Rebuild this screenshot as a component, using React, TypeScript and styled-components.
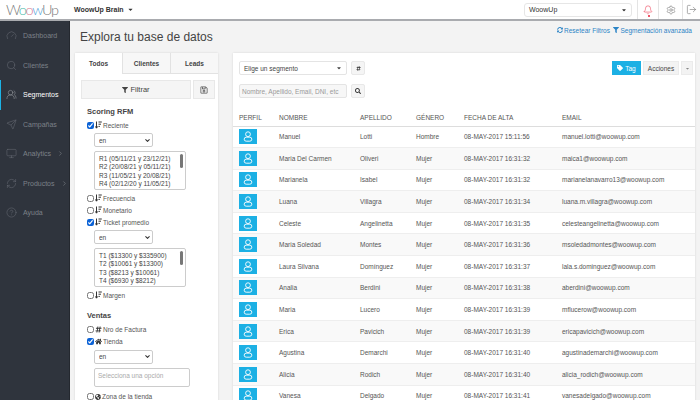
import React from 'react';
import styled, { createGlobalStyle } from 'styled-components';
import { FaFilter, FaRegSave, FaTag, FaSyncAlt, FaSearch, FaHome, FaGlobeAmericas, FaCaretDown, FaHashtag } from 'react-icons/fa';
import { Gauge, Search, UsersRound, Send, Monitor, RefreshCw, CircleHelp, Bell, Settings, LogOut, ChevronRight, ChevronDown } from 'lucide-react';

const GlobalStyle = createGlobalStyle`
  html, body { margin: 0; padding: 0; height: 400px; overflow: hidden; }
  body { font-family: "Liberation Sans", Arial, sans-serif; color: #444; background: #f3f3f3; }
  * { box-sizing: border-box; }
`;

const Page = styled.div`
  width: 700px;
  height: 400px;
  display: flex;
  flex-direction: column;
  overflow: hidden;
`;

const TopBar = styled.header`
  height: 21px;
  flex: none;
  display: flex;
  align-items: center;
  background: #fff;
  border-bottom: 2px solid #a9abaf;
  padding-left: 6px;
`;

const Logo = styled.div`
  width: 68px;
  font: 300 14.5px Lato, sans-serif;
  color: #777;
  letter-spacing: -1.3px;
`;

const LogoO = styled.span<{ $color: string }>`
  color: ${p => p.$color};
`;

const Brain = styled.div`
  font-size: 7px;
  font-weight: 700;
  color: #333;
  display: flex;
  align-items: center;
  gap: 3px;
  flex: 1;
`;

const TenantSelect = styled.div`
  width: 108px;
  height: 14px;
  margin-right: 5px;
  padding: 0 4px;
  display: flex;
  align-items: center;
  justify-content: space-between;
  font-size: 7px;
  color: #333;
  border: 1px solid #e6e6e6;
  border-radius: 3px;
`;

const TopIcon = styled.div<{ $w: number }>`
  width: ${p => p.$w}px;
  height: 19px;
  display: flex;
  align-items: center;
  justify-content: center;
  border-left: 1px solid #e4e4e4;
  position: relative;
`;

const RedDot = styled.span`
  position: absolute;
  left: 9.5px;
  bottom: 2px;
  width: 2px;
  height: 2px;
  background: #e8213a;
  border-radius: 50%;
`;

const Body = styled.div`
  flex: 1;
  display: flex;
  min-height: 0;
`;

const Sidebar = styled.nav`
  width: 70px;
  flex: none;
  background: #2f343d;
  border-right: 1px solid #24282f;
`;

const NavItem = styled.div<{ $active?: boolean }>`
  height: 29.5px;
  display: flex;
  align-items: center;
  gap: 6px;
  padding-left: ${p => (p.$active ? '5px' : '6px')};
  font-size: 7px;
  color: ${p => (p.$active ? '#fff' : '#7c8188')};
  border-left: ${p => (p.$active ? '1px solid #1cb3e6' : 'none')};

  svg:first-child {
    color: ${p => (p.$active ? '#9a9da3' : '#666b73')};
  }
`;

const Main = styled.main`
  flex: 1;
  min-width: 0;
  padding: 0 5px;
`;

const HeadRow = styled.div`
  height: 32px;
  display: flex;
  align-items: center;
  justify-content: space-between;
  padding: 0 3px 0 5px;
`;

const Title = styled.h1`
  margin: 0;
  font-size: 12px;
  font-weight: 400;
  color: #444;
`;

const Links = styled.div`
  display: flex;
  gap: 3px;
  font-size: 6.5px;
  color: #2b84c6;
  position: relative;
  top: -7px;
`;

const LinkItem = styled.span`
  display: flex;
  align-items: center;
  gap: 1.5px;
`;

const Columns = styled.div`
  display: flex;
  gap: 15px;
`;

const LeftPanel = styled.section`
  width: 143px;
  height: 350px;
  flex: none;
  background: #fff;
  box-shadow: 0 0 2px rgba(0, 0, 0, 0.12);
  overflow: hidden;
`;

const Tabs = styled.div`
  display: flex;
  height: 21px;
`;

const Tab = styled.div<{ $active?: boolean }>`
  flex: 1;
  display: flex;
  align-items: center;
  justify-content: center;
  font-size: 6.5px;
  font-weight: 700;
  color: #444;
  background: ${p => (p.$active ? '#fff' : '#f7f7f7')};
  border-left: ${p => (p.$active ? 'none' : '1px solid #e2e2e2')};
  border-bottom: ${p => (p.$active ? 'none' : '1px solid #e2e2e2')};
`;

const FilterBar = styled.div`
  display: flex;
  gap: 2px;
  padding: 6px 3px 0 6px;
`;

const FilterButton = styled.button`
  flex: 1;
  height: 19px;
  font: 7.5px "Liberation Sans", sans-serif;
  color: #444;
  background: #f5f5f5;
  border: 1px solid #e8e8e8;
  display: flex;
  align-items: center;
  justify-content: center;
  gap: 2px;
  padding: 0;
`;

const SaveButton = styled(FilterButton)`
  flex: none;
  width: 22px;
`;

const Filters = styled.div`
  padding: 8px 0 0 12px;
`;

const SectionTitle = styled.h3<{ $top?: number }>`
  margin: ${p => p.$top ?? 0}px 0 ${p => (p.$top ? 3.5 : 3)}px;
  font-size: 7.5px;
  line-height: 9px;
  font-weight: 700;
  color: #444;
`;

const CheckRow = styled.label`
  height: 12px;
  display: flex;
  align-items: center;
  gap: 1px;
  font-size: 6.5px;
  color: #555;
`;

const Check = styled.input.attrs({ type: 'checkbox' })`
  width: 7px;
  height: 7px;
  margin: 0;
  accent-color: #0b62d6;
`;

const SelectWrap = styled.div`
  position: relative;
  width: 59px;
  height: 14px;
  margin: 2px 0 4px 7px;

  svg {
    position: absolute;
    top: 3.5px;
    right: 2px;
    pointer-events: none;
    color: #333;
  }
`;

const SmallSelect = styled.select`
  display: block;
  width: 100%;
  height: 100%;
  padding: 0 0 0 4px;
  appearance: none;
  font: 6.5px "Liberation Sans", sans-serif;
  color: #444;
  background: #fff;
  border: 1px solid #ccc;
  border-radius: 2px;
`;

const ListBox = styled.div`
  position: relative;
  width: 92px;
  height: 39px;
  margin: 0 0 2px 7px;
  padding: 3px 4px;
  overflow: hidden;
  font-size: 6.5px;
  line-height: 8.4px;
  color: #444;
  border: 1px solid #ccc;
  border-radius: 2px;
  white-space: nowrap;
`;

const Thumb = styled.span`
  position: absolute;
  top: 2px;
  right: 2px;
  width: 3px;
  height: 14px;
  background: #777;
  border-radius: 2px;
`;

const TextArea = styled.div`
  width: 96px;
  height: 19px;
  margin: 1px 0 4px 7px;
  padding: 3px;
  font-size: 6.5px;
  color: #aaa;
  border: 1px solid #ccc;
  border-radius: 2px;
`;

const RightPanel = styled.section`
  width: 462px;
  height: 350px;
  flex: none;
  background: #fff;
  box-shadow: 0 0 2px rgba(0, 0, 0, 0.12);
  overflow: hidden;
`;

const Controls = styled.div`
  display: flex;
  justify-content: space-between;
  padding: 8px 2px 0 6px;
  height: 57px;
`;

const ControlStack = styled.div`
  display: flex;
  flex-direction: column;
  gap: 9px;
`;

const ControlRow = styled.div`
  display: flex;
  gap: 4px;
  align-items: center;
`;

const SegmentSelect = styled.div`
  width: 108px;
  height: 14px;
  padding: 0 4px;
  display: flex;
  align-items: center;
  justify-content: space-between;
  font-size: 6.5px;
  color: #444;
  border: 1px solid #e4e4e4;
  border-radius: 2px;
`;

const SearchInput = styled(SegmentSelect)`
  background: #f7f7f7;
  color: #999;
  padding: 0 2px;
`;

const SquareButton = styled.div`
  width: 14px;
  height: 14px;
  display: flex;
  align-items: center;
  justify-content: center;
  background: #f5f5f5;
  border: 1px solid #e8e8e8;
  border-radius: 2px;
  color: #333;
`;

const Actions = styled.div`
  display: flex;
  align-items: flex-start;
  gap: 2px;
`;

const TagButton = styled.div`
  height: 14px;
  width: 29px;
  display: flex;
  align-items: center;
  justify-content: center;
  gap: 2px;
  font-size: 6.5px;
  color: #fff;
  background: #1cb0e4;
`;

const ActionButton = styled.div<{ $w: number }>`
  height: 14px;
  width: ${p => p.$w}px;
  display: flex;
  align-items: center;
  justify-content: center;
  font-size: 6.5px;
  color: #444;
  background: #f3f3f3;
  border: 1px solid #ebebeb;
`;

const Table = styled.table`
  width: 100%;
  table-layout: fixed;
  border-collapse: collapse;
  font-size: 6.5px;
  color: #555;
`;

const Th = styled.th<{ $w?: number }>`
  width: ${p => (p.$w ? `${p.$w}px` : 'auto')};
  height: 16px;
  padding: 0 0 0 6px;
  text-align: left;
  font-weight: 400;
  color: #555;
  border-bottom: 1px solid #ddd;
`;

const Row = styled.tr<{ $alt: boolean }>`
  height: 21.6px;
  background: ${p => (p.$alt ? '#f9f9f9' : '#fff')};
  border-bottom: 1px solid #eee;
`;

const Td = styled.td`
  padding: 0 0 0 6px;
  white-space: nowrap;
  overflow: hidden;
`;

const Avatar = styled.div`
  width: 18px;
  height: 15px;
  display: flex;
  align-items: center;
  justify-content: center;
  background: #1cb0e4;
`;

// arrow with three shrinking bars, the sort mark next to the RFM filters
const SortIcon = () => (
  <svg width="7" height="8" viewBox="0 0 7 8" fill="none" stroke="#333" strokeWidth="1">
    <path d="M1.5 0.5v6.5M0.3 5.4l1.2 1.8 1.2-1.8" />
    <path d="M3.5 1h3.3M3.5 3.2h2.5M3.5 5.4h1.4" />
  </svg>
);

const ProfileIcon = () => (
  <svg width="10" height="11" viewBox="0 0 10 11" fill="none" stroke="#fff" strokeWidth="0.9">
    <circle cx="5" cy="3.2" r="2.4" />
    <rect x="1.2" y="6.2" width="7.6" height="4" rx="2" />
  </svg>
);

const EnSelect = () => (
  <SelectWrap>
    <SmallSelect defaultValue="en">
      <option value="en">en</option>
    </SmallSelect>
    <ChevronDown size={7} strokeWidth={3.5} />
  </SelectWrap>
);

const people = [
  ['Manuel', 'Lotti', 'Hombre', '08-MAY-2017 15:11:56', 'manuel.lotti@woowup.com'],
  ['Maria Del Carmen', 'Oliveri', 'Mujer', '08-MAY-2017 16:31:32', 'maica1@woowup.com'],
  ['Marianela', 'Isabel', 'Mujer', '08-MAY-2017 16:31:32', 'marianelanavarro13@woowup.com'],
  ['Luana', 'Villagra', 'Mujer', '08-MAY-2017 16:31:34', 'luana.m.villagra@woowup.com'],
  ['Celeste', 'Angelinetta', 'Mujer', '08-MAY-2017 16:31:35', 'celesteangelinetta@woowup.com'],
  ['Maria Soledad', 'Montes', 'Mujer', '08-MAY-2017 16:31:36', 'msoledadmontes@woowup.com'],
  ['Laura Silvana', 'Domínguez', 'Mujer', '08-MAY-2017 16:31:37', 'lala.s.dominguez@woowup.com'],
  ['Analia', 'Berdini', 'Mujer', '08-MAY-2017 16:31:38', 'aberdini@woowup.com'],
  ['Maria', 'Lucero', 'Mujer', '08-MAY-2017 16:31:39', 'mflucerow@woowup.com'],
  ['Erica', 'Pavicich', 'Mujer', '08-MAY-2017 16:31:39', 'ericapavicich@woowup.com'],
  ['Agustina', 'Demarchi', 'Mujer', '08-MAY-2017 16:31:40', 'agustinademarchi@woowup.com'],
  ['Alicia', 'Rodich', 'Mujer', '08-MAY-2017 16:31:40', 'alicia_rodich@woowup.com'],
  ['Vanesa', 'Delgado', 'Mujer', '08-MAY-2017 16:31:41', 'vanesadelgado@woowup.com'],
];

const navItems = [
  { label: 'Dashboard', icon: <Gauge size={11} strokeWidth={1.2} /> },
  { label: 'Clientes', icon: <Search size={11} strokeWidth={1.2} /> },
  { label: 'Segmentos', icon: <UsersRound size={11} strokeWidth={1.2} />, active: true },
  { label: 'Campañas', icon: <Send size={11} strokeWidth={1.2} /> },
  { label: 'Analytics', icon: <Monitor size={11} strokeWidth={1.2} />, arrow: true },
  { label: 'Productos', icon: <RefreshCw size={11} strokeWidth={1.2} />, arrow: true },
  { label: 'Ayuda', icon: <CircleHelp size={11} strokeWidth={1.2} /> },
];

const App: React.FC = () => {
  return (
    <Page>
      <GlobalStyle />
      <TopBar>
        <Logo>
          W<LogoO $color="#45b8a6">o</LogoO><LogoO $color="#d9788f">o</LogoO>
          <LogoO $color="#4f9fd8">w</LogoO>Up
        </Logo>
        <Brain>
          WoowUp Brain <FaCaretDown size={7} />
        </Brain>
        <TenantSelect>
          WoowUp <FaCaretDown size={6} />
        </TenantSelect>
        <TopIcon $w={21}>
          <Bell size={10} color="#e8213a" strokeWidth={1.2} />
          <RedDot />
        </TopIcon>
        <TopIcon $w={24}>
          <Settings size={10} color="#999" strokeWidth={2} />
        </TopIcon>
        <TopIcon $w={18}>
          <LogOut size={11} color="#888" strokeWidth={1.5} />
        </TopIcon>
      </TopBar>
      <Body>
        <Sidebar>
          {navItems.map(item => (
            <NavItem key={item.label} $active={item.active}>
              {item.icon}
              {item.label}
              {item.arrow && <ChevronRight size={7} />}
            </NavItem>
          ))}
        </Sidebar>
        <Main>
          <HeadRow>
            <Title>Explora tu base de datos</Title>
            <Links>
              <LinkItem><FaSyncAlt size={6} /> Resetear Filtros</LinkItem>
              <LinkItem><FaFilter size={6} /> Segmentación avanzada</LinkItem>
            </Links>
          </HeadRow>
          <Columns>
            <LeftPanel>
              <Tabs>
                <Tab $active>Todos</Tab>
                <Tab>Clientes</Tab>
                <Tab>Leads</Tab>
              </Tabs>
              <FilterBar>
                <FilterButton><FaFilter size={6} /> Filtrar</FilterButton>
                <SaveButton><FaRegSave size={8} color="#555" /></SaveButton>
              </FilterBar>
              <Filters>
                <SectionTitle>Scoring RFM</SectionTitle>
                <CheckRow><Check defaultChecked /><SortIcon /> Reciente</CheckRow>
                <EnSelect />
                <ListBox>
                  R1 (05/11/21 y 23/12/21)<br />
                  R2 (20/08/21 y 05/11/21)<br />
                  R3 (11/05/21 y 20/08/21)<br />
                  R4 (02/12/20 y 11/05/21)<br />
                  R5 (28/02/20 y 02/12/20)
                  <Thumb />
                </ListBox>
                <CheckRow><Check /><SortIcon /> Frecuencia</CheckRow>
                <CheckRow><Check /><SortIcon /> Monetario</CheckRow>
                <CheckRow><Check defaultChecked /><SortIcon /> Ticket promedio</CheckRow>
                <EnSelect />
                <ListBox>
                  T1 ($13300 y $335900)<br />
                  T2 ($10061 y $13300)<br />
                  T3 ($8213 y $10061)<br />
                  T4 ($6930 y $8212)<br />
                  T5 ($5800 y $6930)
                  <Thumb />
                </ListBox>
                <CheckRow><Check /><SortIcon /> Margen</CheckRow>
                <SectionTitle $top={10}>Ventas</SectionTitle>
                <CheckRow><Check /><FaHashtag size={7} color="#333" /> Nro de Factura</CheckRow>
                <CheckRow><Check defaultChecked /><FaHome size={7} color="#333" /> Tienda</CheckRow>
                <EnSelect />
                <TextArea>Selecciona una opción</TextArea>
                <CheckRow><Check /><FaGlobeAmericas size={6} color="#333" /> Zona de la tienda</CheckRow>
              </Filters>
            </LeftPanel>
            <RightPanel>
              <Controls>
                <ControlStack>
                  <ControlRow>
                    <SegmentSelect>Elige un segmento <FaCaretDown size={6} /></SegmentSelect>
                    <SquareButton><FaHashtag size={5} /></SquareButton>
                  </ControlRow>
                  <ControlRow>
                    <SearchInput>Nombre, Apellido, Email, DNI, etc</SearchInput>
                    <SquareButton><FaSearch size={6} /></SquareButton>
                  </ControlRow>
                </ControlStack>
                <Actions>
                  <TagButton><FaTag size={6} /> Tag</TagButton>
                  <ActionButton $w={36}>Acciones</ActionButton>
                  <ActionButton $w={12}><FaCaretDown size={5} color="#888" /></ActionButton>
                </Actions>
              </Controls>
              <Table>
                <thead>
                  <tr>
                    <Th $w={40}>PERFIL</Th>
                    <Th $w={81}>NOMBRE</Th>
                    <Th $w={56}>APELLIDO</Th>
                    <Th $w={48}>GÉNERO</Th>
                    <Th $w={98}>FECHA DE ALTA</Th>
                    <Th>EMAIL</Th>
                  </tr>
                </thead>
                <tbody>
                  {people.map((p, i) => (
                    <Row key={p[4]} $alt={i % 2 === 1}>
                      <Td><Avatar><ProfileIcon /></Avatar></Td>
                      {p.map(value => <Td key={value}>{value}</Td>)}
                    </Row>
                  ))}
                </tbody>
              </Table>
            </RightPanel>
          </Columns>
        </Main>
      </Body>
    </Page>
  );
};

export default App;
